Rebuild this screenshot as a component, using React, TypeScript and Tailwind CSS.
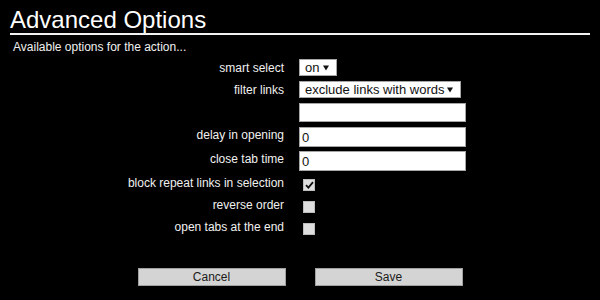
import React from "react";

function SelectBox({ value, width }: { value: string; width: string }) {
  return (
    <div
      className={`${width} h-[17px] flex items-center justify-between bg-white border border-[#a6a6a6] pl-[5px] pr-[7px] text-[13px] leading-none text-[#111]`}
    >
      <span>{value}</span>
      <svg width="6" height="6" viewBox="0 0 6 6" className="shrink-0">
        <path d="M0 0.5 H6 L3 5.5 Z" fill="#111" />
      </svg>
    </div>
  );
}

function TextBox({ value, height }: { value: string; height: string }) {
  return (
    <div
      className={`w-[167px] ${height} flex items-center bg-white border border-[#a6a6a6] pl-[2px] text-[13px] leading-none text-[#111]`}
    >
      {value}
    </div>
  );
}

function Check({ checked }: { checked?: boolean }) {
  return (
    <div className="ml-[4px] w-[12px] h-[12px] bg-[#dedede] border border-[#bdbdbd] flex items-center justify-center">
      {checked && (
        <svg width="9" height="8" viewBox="0 0 9 8">
          <path d="M1 4.2 L3.4 6.6 L8 1.2" fill="none" stroke="#111" strokeWidth="1.8" />
        </svg>
      )}
    </div>
  );
}

export default function App() {
  const labelCls = "text-right text-[12px] leading-[14px] text-[#f0f0f0]";

  return (
    <div
      className="w-[600px] h-[300px] bg-black overflow-hidden"
      style={{ fontFamily: '"Liberation Sans", Arial, sans-serif' }}
    >
      <div className="mx-[10px]">
        {/* Header */}
        <h1 className="pt-[6px] text-[24px] leading-[27px] text-white border-b-2 border-[#f2f2f2]">
          Advanced Options
        </h1>
        <p className="mt-[5px] pl-[3px] text-[12px] leading-[14px] text-[#f0f0f0]">
          Available options for the action...
        </p>

        {/* Options */}
        <div className="mt-[5px] grid grid-cols-[274px_1fr] gap-x-[15px] items-center">
          <div className={labelCls}>smart select</div>
          <div className="h-[17px]">
            <SelectBox value="on" width="w-[38px]" />
          </div>

          <div className={`${labelCls} mt-[5px]`}>filter links</div>
          <div className="mt-[5px]">
            <SelectBox value="exclude links with words" width="w-[162px]" />
          </div>

          <div className="mt-[5px]" />
          <div className="mt-[5px]">
            <TextBox value="" height="h-[19px]" />
          </div>

          <div className={`${labelCls} mt-[5px] -translate-y-[2px]`}>delay in opening</div>
          <div className="mt-[5px]">
            <TextBox value="0" height="h-[20px]" />
          </div>

          <div className={`${labelCls} mt-[4px] -translate-y-[2px]`}>close tab time</div>
          <div className="mt-[4px]">
            <TextBox value="0" height="h-[20px]" />
          </div>

          <div className={`${labelCls} mt-[3px] h-[22px] flex items-center justify-end -translate-y-[2px]`}>
            block repeat links in selection
          </div>
          <div className="mt-[3px] h-[22px] flex items-center">
            <Check checked />
          </div>

          <div className={`${labelCls} h-[22px] flex items-center justify-end -translate-y-[2px]`}>
            reverse order
          </div>
          <div className="h-[22px] flex items-center">
            <Check />
          </div>

          <div className={`${labelCls} h-[22px] flex items-center justify-end -translate-y-[2px]`}>
            open tabs at the end
          </div>
          <div className="h-[22px] flex items-center">
            <Check />
          </div>
        </div>
      </div>

      {/* Buttons */}
      <div className="mt-[28px] flex justify-center gap-[29px]">
        <button className="w-[148px] h-[18px] bg-[#d4d4d4] border border-[#a0a0a0] text-[12px] leading-none text-[#1a1a1a]">
          Cancel
        </button>
        <button className="w-[148px] h-[18px] bg-[#d4d4d4] border border-[#a0a0a0] text-[12px] leading-none text-[#1a1a1a]">
          Save
        </button>
      </div>
    </div>
  );
}
